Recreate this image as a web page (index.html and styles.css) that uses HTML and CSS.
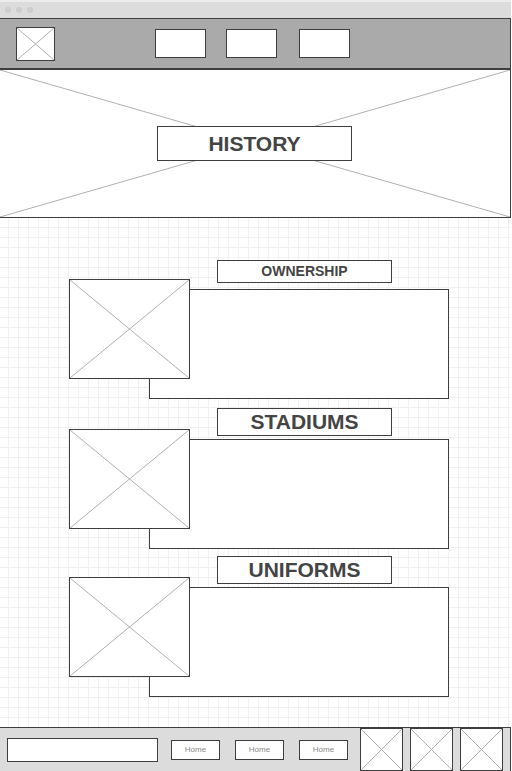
FILE: index.html
```html
<!DOCTYPE html>
<html>

<head>
    <title>History</title>
    <link rel="stylesheet" href="styles.css">
</head>

<body>
    <div class="frame">
        <div class="chrome">
            <span class="dot"></span>
            <span class="dot"></span>
            <span class="dot"></span>
        </div>

        <div class="header">
            <div class="logo placeholder">
                <svg viewBox="0 0 100 100" preserveAspectRatio="none"><line x1="0" y1="0" x2="100" y2="100" /><line x1="100" y1="0" x2="0" y2="100" /></svg>
            </div>
            <div class="nav">
                <div class="nav-item"></div>
                <div class="nav-item"></div>
                <div class="nav-item"></div>
            </div>
        </div>

        <div class="hero">
            <svg class="hero-bg" viewBox="0 0 100 100" preserveAspectRatio="none"><line x1="0" y1="0" x2="100" y2="100" /><line x1="100" y1="0" x2="0" y2="100" /></svg>
            <h1 class="hero-title">HISTORY</h1>
        </div>

        <div class="content">
            <div class="section">
                <h2 class="section-title small">OWNERSHIP</h2>
                <div class="section-body">
                    <div class="section-image placeholder">
                        <svg viewBox="0 0 100 100" preserveAspectRatio="none"><line x1="0" y1="0" x2="100" y2="100" /><line x1="100" y1="0" x2="0" y2="100" /></svg>
                    </div>
                    <div class="section-text"></div>
                </div>
            </div>

            <div class="section">
                <h2 class="section-title">STADIUMS</h2>
                <div class="section-body">
                    <div class="section-image placeholder">
                        <svg viewBox="0 0 100 100" preserveAspectRatio="none"><line x1="0" y1="0" x2="100" y2="100" /><line x1="100" y1="0" x2="0" y2="100" /></svg>
                    </div>
                    <div class="section-text"></div>
                </div>
            </div>

            <div class="section">
                <h2 class="section-title">UNIFORMS</h2>
                <div class="section-body">
                    <div class="section-image placeholder">
                        <svg viewBox="0 0 100 100" preserveAspectRatio="none"><line x1="0" y1="0" x2="100" y2="100" /><line x1="100" y1="0" x2="0" y2="100" /></svg>
                    </div>
                    <div class="section-text"></div>
                </div>
            </div>
        </div>

        <div class="footer">
            <div class="search"></div>
            <div class="footer-links">
                <a class="footer-link">Home</a>
                <a class="footer-link">Home</a>
                <a class="footer-link">Home</a>
            </div>
            <div class="footer-images">
                <div class="footer-image placeholder">
                    <svg viewBox="0 0 100 100" preserveAspectRatio="none"><line x1="0" y1="0" x2="100" y2="100" /><line x1="100" y1="0" x2="0" y2="100" /></svg>
                </div>
                <div class="footer-image placeholder">
                    <svg viewBox="0 0 100 100" preserveAspectRatio="none"><line x1="0" y1="0" x2="100" y2="100" /><line x1="100" y1="0" x2="0" y2="100" /></svg>
                </div>
                <div class="footer-image placeholder">
                    <svg viewBox="0 0 100 100" preserveAspectRatio="none"><line x1="0" y1="0" x2="100" y2="100" /><line x1="100" y1="0" x2="0" y2="100" /></svg>
                </div>
            </div>
        </div>
    </div>
</body>

</html>
```

FILE: styles.css
```css
body {
    margin: 0;
    font-family: "Liberation Sans", Arial, sans-serif;
    background: #ffffff;
    color: #444;
    overflow: hidden;
}

.frame {
    width: 511px;
    height: 771px;
    display: flex;
    flex-direction: column;
}

svg line {
    stroke: #b0b0b0;
    stroke-width: 1;
    vector-effect: non-scaling-stroke;
}

.placeholder {
    box-sizing: border-box;
    border: 1px solid #3e3e3e;
    background: #fff;
}

.placeholder svg {
    display: block;
    width: 100%;
    height: 100%;
}

/* window chrome */

.chrome {
    height: 18px;
    box-sizing: border-box;
    background: #dcdcdc;
    border-top: 2px solid #ececec;
    display: flex;
    align-items: center;
    gap: 5px;
    padding-left: 5px;
}

.chrome .dot {
    width: 6px;
    height: 6px;
    border-radius: 50%;
    background: #cdcdcd;
}

/* header */

.header {
    height: 52px;
    box-sizing: border-box;
    background: #aaaaaa;
    border-top: 1px solid #3e3e3e;
    border-bottom: 2px solid #3e3e3e;
    border-right: 1px solid #3e3e3e;
    display: flex;
    align-items: center;
    padding-left: 16px;
}

.logo {
    width: 39px;
    height: 34px;
}

.nav {
    display: flex;
    gap: 20px;
    margin-left: 100px;
}

.nav-item {
    width: 51px;
    height: 29px;
    box-sizing: border-box;
    border: 1px solid #3e3e3e;
    background: #fff;
}

.nav-item:last-child {
    margin-left: 2px;
}

/* hero */

.hero {
    height: 148px;
    box-sizing: border-box;
    border-bottom: 1px solid #3e3e3e;
    border-right: 1px solid #3e3e3e;
    position: relative;
    display: flex;
    justify-content: center;
    align-items: center;
}

.hero-bg {
    position: absolute;
    top: 0;
    left: 0;
    width: 100%;
    height: 100%;
}

.hero-title {
    position: relative;
    margin: 0 0 0 -1px;
    width: 195px;
    height: 35px;
    box-sizing: border-box;
    border: 1px solid #3e3e3e;
    background: #fff;
    font-size: 21px;
    font-weight: bold;
    line-height: 33px;
    text-align: center;
}

/* content */

.content {
    flex: 1;
    padding-top: 42px;
    background-color: #fff;
    background-image:
        linear-gradient(to right, #f1f1f1 1px, transparent 1px),
        linear-gradient(to bottom, #f1f1f1 1px, transparent 1px);
    background-size: 10px 10px;
    background-position: 8px 9px;
}

.section {
    margin-left: 69px;
    width: 380px;
}

.section + .section {
    margin-top: 9px;
}

.section:last-child {
    margin-top: 7px;
}

.section-title {
    margin: 0 0 0 148px;
    width: 175px;
    height: 28px;
    box-sizing: border-box;
    border: 1px solid #3e3e3e;
    background: #fff;
    font-size: 21px;
    font-weight: bold;
    line-height: 26px;
    text-align: center;
}

.section-title.small {
    height: 23px;
    font-size: 14px;
    line-height: 21px;
}

.section-body {
    display: grid;
    grid-template-columns: 80px 41px 259px;
    grid-template-rows: 10px 90px 20px;
    margin-top: -7px;
}

.section-title.small + .section-body {
    margin-top: -4px;
}

.section-image {
    grid-column: 1 / 3;
    grid-row: 1 / 3;
    z-index: 1;
}

.section-text {
    grid-column: 2 / 4;
    grid-row: 2 / 4;
    box-sizing: border-box;
    border: 1px solid #3e3e3e;
    background: #fff;
}

/* footer */

.footer {
    height: 44px;
    box-sizing: border-box;
    background: #dcdcdc;
    border-top: 1px solid #3e3e3e;
    border-right: 1px solid #3e3e3e;
    display: flex;
    align-items: center;
    padding-left: 7px;
}

.search {
    width: 151px;
    height: 24px;
    box-sizing: border-box;
    border: 1px solid #3e3e3e;
    background: #fff;
}

.footer-links {
    display: flex;
    gap: 15px;
    margin-left: 13px;
}

.footer-link {
    width: 49px;
    height: 20px;
    box-sizing: border-box;
    border: 1px solid #3e3e3e;
    background: #fff;
    font-size: 8px;
    line-height: 18px;
    text-align: center;
    color: #888;
}

.footer-images {
    display: flex;
    gap: 7px;
    margin-left: 12px;
    align-self: stretch;
}

.footer-image {
    width: 43px;
    height: 100%;
}
```
